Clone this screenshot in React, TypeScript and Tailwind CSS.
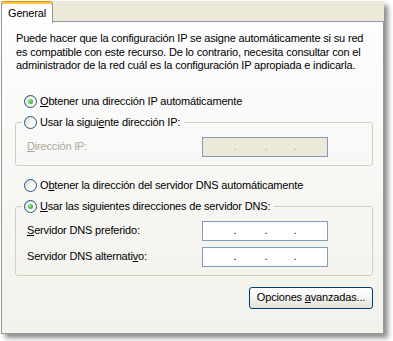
import type { ReactNode } from 'react'

function Radio({ checked }: { checked?: boolean }) {
  return (
    <span className="flex h-[13px] w-[13px] shrink-0 items-center justify-center rounded-full border border-[#1C5180] bg-linear-to-br from-[#DCDCD5] via-[#F6F6F3] to-white">
      {checked && (
        <span className="h-[5px] w-[5px] rounded-full bg-[radial-gradient(circle_at_35%_35%,#8BEA86,#21A121)]" />
      )}
    </span>
  )
}

function RadioLabel({ checked, children }: { checked?: boolean; children: ReactNode }) {
  return (
    <span className="flex h-[16px] items-center gap-[3px] whitespace-nowrap">
      <Radio checked={checked} />
      <span>{children}</span>
    </span>
  )
}

function IpBox({ disabled }: { disabled?: boolean }) {
  const dot = disabled ? 'text-[#ACA899]' : 'text-black'
  return (
    <div
      className={`flex h-[20px] w-[126px] items-center border border-[#7F9DB9] ${
        disabled ? 'bg-[#ECE9D8]' : 'bg-white'
      }`}
    >
      <span className="w-[30px]" />
      <span className={`w-[4px] text-center ${dot}`}>.</span>
      <span className="w-[27px]" />
      <span className={`w-[4px] text-center ${dot}`}>.</span>
      <span className="w-[25px]" />
      <span className={`w-[4px] text-center ${dot}`}>.</span>
    </div>
  )
}

function Field({ label, disabled }: { label: ReactNode; disabled?: boolean }) {
  return (
    <div className="ml-[5px] flex h-[20px] items-center">
      <span className={`w-[175px] whitespace-nowrap ${disabled ? 'text-[#ACA899]' : ''}`}>{label}</span>
      <IpBox disabled={disabled} />
    </div>
  )
}

export default function App() {
  return (
    <div className="h-[341px] w-[393px] overflow-hidden bg-white pt-px font-['Liberation_Sans',Arial,sans-serif] text-[11px] leading-[13px] tracking-[-0.17px] text-black">
      <div className="ml-px w-[383px] shadow-[4px_4px_5px_rgba(0,0,0,0.45)]">
        {/* tab strip */}
        <div className="flex h-[20px] bg-[#ECE9D8]">
          <div className="relative z-10 flex h-[22px] w-[52px] items-center justify-center rounded-t-[3px] border-x border-t border-x-[#919B9C] border-t-[#E68B2C] bg-white pt-[2px] shadow-[inset_0_2px_0_#FFC73C]">
            General
          </div>
        </div>

        <div className="flex h-[313px] flex-col border border-[#919B9C] bg-linear-to-b from-[#FDFDFE] to-[#F2F1EB] pt-[10px]">
          <p className="ml-[14px] whitespace-nowrap leading-[13.5px]">
            Puede hacer que la configuración IP se asigne automáticamente si su red
            <br />
            es compatible con este recurso. De lo contrario, necesita consultar con el
            <br />
            administrador de la red cuál es la configuración IP apropiada e indicarla.
          </p>

          <div className="ml-[22px] mt-[21px]">
            <RadioLabel checked>
              <u>O</u>btener una dirección IP automáticamente
            </RadioLabel>
          </div>

          <fieldset className="ml-[13px] mt-[5px] w-[358px] rounded-[3px] border border-[#D0D0BF] pb-[8px] pl-[6px]">
            <legend className="pl-[2px] pr-[4px]">
              <RadioLabel>
                Usar la sigui<u>e</u>nte dirección IP:
              </RadioLabel>
            </legend>
            <div className="mt-[6px]">
              <Field
                disabled
                label={
                  <>
                    <u>D</u>irección IP:
                  </>
                }
              />
            </div>
          </fieldset>

          <div className="ml-[22px] mt-[12px]">
            <RadioLabel>
              O<u>b</u>tener la dirección del servidor DNS automáticamente
            </RadioLabel>
          </div>

          <fieldset className="ml-[13px] mt-[5px] w-[358px] rounded-[3px] border border-[#D0D0BF] pb-[8px] pl-[6px]">
            <legend className="pl-[2px] pr-[4px]">
              <RadioLabel checked>
                <u>U</u>sar las siguientes direcciones de servidor DNS:
              </RadioLabel>
            </legend>
            <div className="mt-[6px] flex flex-col gap-[6px]">
              <Field
                label={
                  <>
                    <u>S</u>ervidor DNS preferido:
                  </>
                }
              />
              <Field
                label={
                  <>
                    Servidor DNS alternati<u>v</u>o:
                  </>
                }
              />
            </div>
          </fieldset>

          <div className="mt-[11px] flex justify-end pr-[10px]">
            <button
              type="button"
              className="h-[22px] w-[124px] whitespace-nowrap rounded-[3px] border border-[#003C74] bg-linear-to-b from-white via-[#F4F4F0] to-[#E3E0D6] text-center text-black"
            >
              Opciones <u>a</u>vanzadas...
            </button>
          </div>
        </div>
      </div>
    </div>
  )
}
